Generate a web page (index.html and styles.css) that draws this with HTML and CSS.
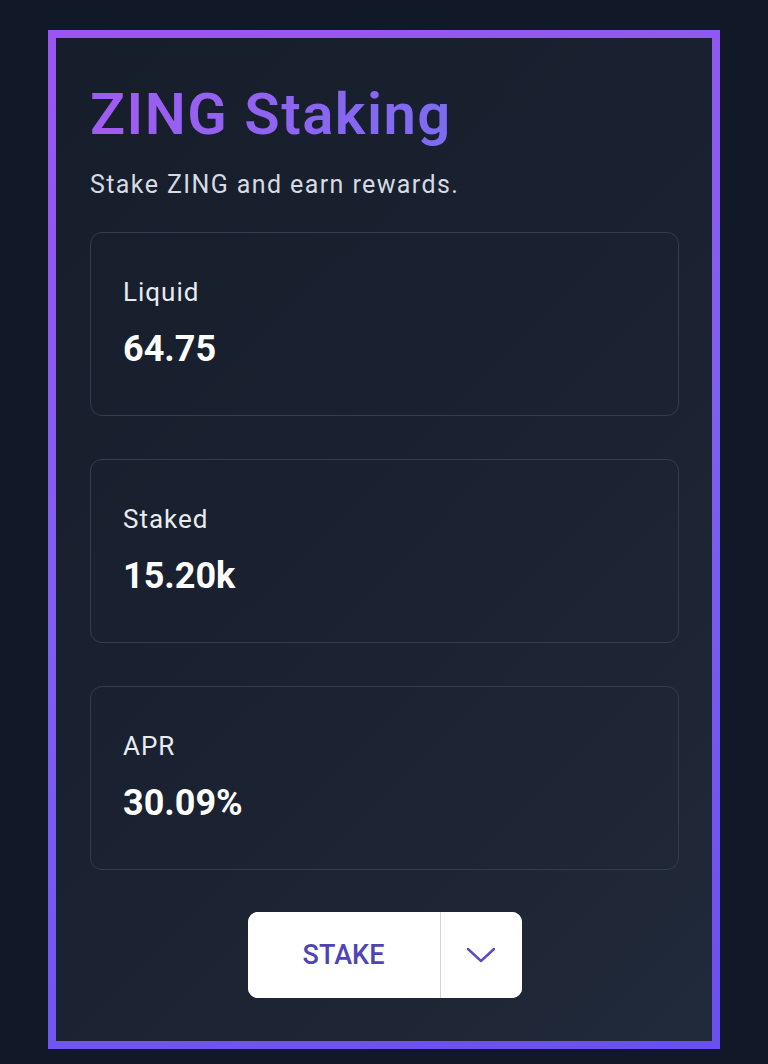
FILE: index.html
```html
<!DOCTYPE html>
<html>
	<head>
		<meta charset="UTF-8">
		<title>ZING Staking</title>
		<link rel="stylesheet" href="styles.css">
	</head>
	<body>
		<div class="panel">
			<h1 class="title">ZING Staking</h1>
			<p class="sub">Stake ZING and earn rewards.</p>

			<div class="stat">
				<div class="label">Liquid</div>
				<div class="value">64.75</div>
			</div>
			<div class="stat">
				<div class="label">Staked</div>
				<div class="value">15.20k</div>
			</div>
			<div class="stat">
				<div class="label">APR</div>
				<div class="value">30.09%</div>
			</div>

			<div class="btn-group">
				<button class="btn-main">STAKE</button>
				<button class="btn-arrow">
					<svg width="30" height="18" viewBox="0 0 30 18"><path d="M2 3 L15 15 L28 3" fill="none" stroke="#5a4cc2" stroke-width="2.4" stroke-linecap="round" stroke-linejoin="round"/></svg>
				</button>
			</div>
		</div>
	</body>
</html>
```

FILE: styles.css
```css
html,body{
	margin: 0;
	padding: 0;
}
body{
	background: #111827;
	font-family: "Roboto", "Liberation Sans", sans-serif;
	padding: 30px 48px 17px;
}
.panel{
	border: 8px solid transparent;
	background:
		linear-gradient(135deg, #161d2b 0%, #1a2130 50%, #212a3a 100%) padding-box,
		linear-gradient(160deg, #9b55f2 0%, #7d5ff0 50%, #6a4ff0 100%) border-box;
	padding: 41px 33px 43px 34px;
	display: flex;
	flex-direction: column;
}
.title{
	margin: 0;
	font-size: 58px;
	font-weight: 600;
	line-height: 70px;
	letter-spacing: 1.5px;
	background: linear-gradient(90deg, #a05cf0, #7d6cf0);
	-webkit-background-clip: text;
	background-clip: text;
	color: transparent;
	align-self: flex-start;
}
.sub{
	margin: 21px 0 32px;
	font-size: 25px;
	line-height: 30px;
	letter-spacing: 1.4px;
	color: #d6dbe3;
}
.stat{
	border: 1px solid #343d4d;
	border-radius: 12px;
	padding: 0 32px;
	margin-bottom: 43px;
	display: flex;
	flex-direction: column;
	justify-content: center;
	box-sizing: border-box;
	height: 184px;
}
.label{
	font-size: 26px;
	letter-spacing: 1px;
	color: #e8ebf0;
	line-height: 30px;
	margin-top: -3px;
}
.value{
	margin-top: 22px;
	font-size: 36px;
	font-weight: 700;
	color: #ffffff;
	line-height: 40px;
}
.btn-group{
	align-self: center;
	display: flex;
	background: #ffffff;
	border-radius: 10px;
	height: 86px;
	margin-top: -1px;
	overflow: hidden;
}
.btn-main, .btn-arrow{
	border: none;
	background: #ffffff;
	font-family: inherit;
	cursor: pointer;
	padding: 0;
}
.btn-main{
	width: 193px;
	font-size: 27px;
	font-weight: 500;
	color: #4f44b4;
	border-right: 1px solid #cfd3da;
}
.btn-arrow{
	width: 81px;
	display: flex;
	align-items: center;
	justify-content: center;
}
```
